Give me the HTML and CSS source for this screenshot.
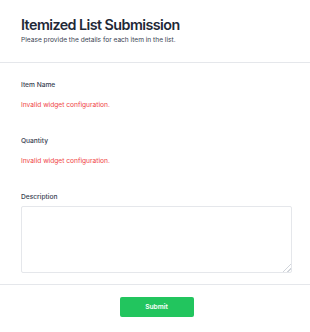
FILE: index.html
```html
<!DOCTYPE html>
<html lang="en">
<head>
    <meta charset="UTF-8">
    <meta name="viewport" content="width=device-width, initial-scale=1.0">
    <title>Itemized List Submission</title>
    <link rel="stylesheet" href="styles.css">
</head>
<body>
    <div class="card">
        <header class="card-header">
            <h1>Itemized List Submission</h1>
            <p class="subtitle">Please provide the details for each item in the list.</p>
        </header>

        <form class="card-body" id="itemForm">
            <div class="field">
                <label>Item Name</label>
                <p class="widget-error">Invalid widget configuration.</p>
            </div>

            <div class="field">
                <label>Quantity</label>
                <p class="widget-error">Invalid widget configuration.</p>
            </div>

            <div class="field">
                <label for="description">Description</label>
                <textarea id="description"></textarea>
            </div>
        </form>

        <footer class="card-footer">
            <button type="submit" form="itemForm">Submit</button>
        </footer>
    </div>
</body>
</html>
```

FILE: styles.css
```css
:root {
    --text: #1f2937;
    --muted: #374151;
    --border: #e5e7eb;
    --error: #ef4444;
    --green: #22c55e;
}

* {
    box-sizing: border-box;
    margin: 0;
    padding: 0;
    font-family: Inter, 'Noto Sans', sans-serif;
}

body {
    background: white;
    color: var(--text);
}

.card-header {
    padding: 15px 21px 16px;
    border-bottom: 1px solid var(--border);
}

h1 {
    font-size: 14.3px;
    line-height: 19px;
    font-weight: 600;
    letter-spacing: -0.55px;
    color: var(--text);
}

.subtitle {
    font-size: 6.6px;
    line-height: 12px;
    color: var(--muted);
}

.card-body {
    padding: 16px 18px 11px 21px;
    display: flex;
    flex-direction: column;
    gap: 24px;
}

.field label {
    display: block;
    font-size: 6.65px;
    line-height: 12px;
    font-weight: 500;
    color: var(--muted);
    margin-bottom: 3px;
}

.widget-error {
    font-size: 6.65px;
    line-height: 12px;
    color: var(--error);
    padding-top: 5px;
}

textarea {
    display: block;
    width: 100%;
    height: 67px;
    border: 1px solid var(--border);
    border-radius: 2px;
    resize: vertical;
}

textarea::-webkit-resizer {
    background: linear-gradient(135deg, transparent 70%, #d1d5db 70%, #d1d5db 76%, transparent 76%, transparent 85%, #d1d5db 85%, #d1d5db 91%, transparent 91%);
}

.card-footer {
    border-top: 1px solid var(--border);
    padding: 12px 18px 13px 21px;
    display: flex;
    justify-content: center;
}

button {
    background: var(--green);
    color: white;
    border: none;
    border-radius: 2px;
    width: 74px;
    height: 20px;
    font-size: 6.65px;
    font-weight: 600;
    cursor: pointer;
}
```
